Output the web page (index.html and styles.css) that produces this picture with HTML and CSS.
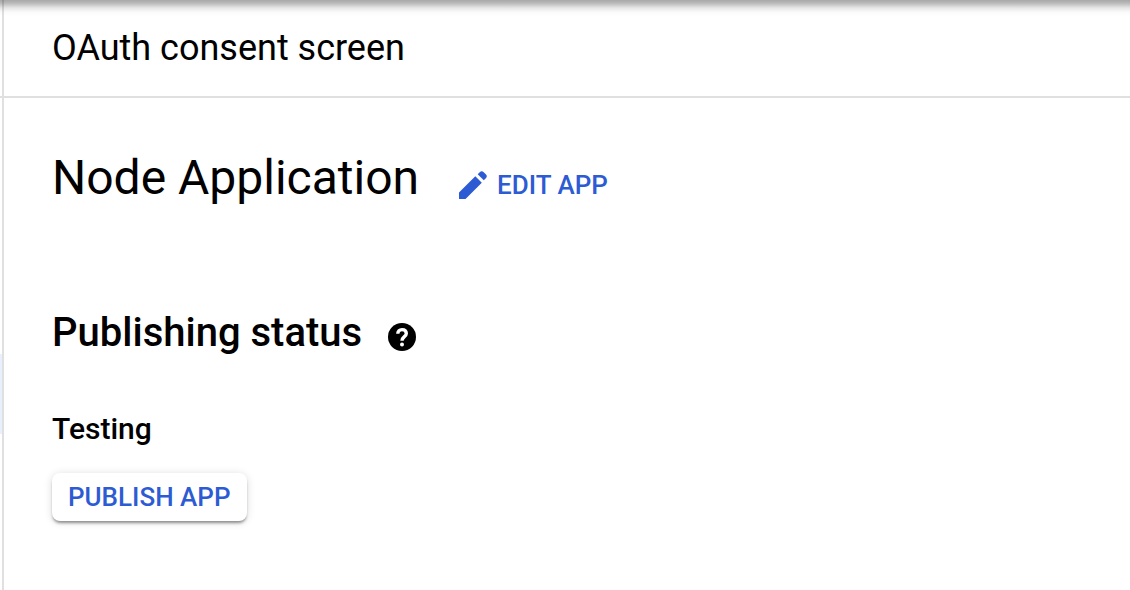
FILE: index.html
```html
<!DOCTYPE html>
<html lang="en">
<head>
<meta charset="utf-8">
<title>OAuth consent screen</title>
<link rel="stylesheet" href="styles.css">
</head>
<body>
<div class="shell">
  <aside class="rail">
    <div class="rail-header"></div>
    <div class="rail-selected"></div>
  </aside>
  <div class="panel">
    <header class="page-header"><h1 class="page-title">OAuth consent screen</h1></header>
    <main class="content">
      <div class="app-row">
        <h2 class="app-name">Node Application</h2>
        <button class="edit-button" type="button">
          <svg class="edit-icon" viewBox="0 0 28 28" aria-hidden="true"><path d="M0 21.500V28h6.500L22.800 11.700l-6.500-6.500zM18.700 3.200L24.800 9.300 26.800 7.300q2-2 0-4L24.700 1.200q-2-2-4 0z"/></svg>
          <span>EDIT APP</span>
        </button>
      </div>
      <div class="status-row">
        <h3 class="status-title">Publishing status</h3>
        <button class="help-button" type="button" aria-label="Help">
          <svg class="help-icon" viewBox="0 0 28 28" aria-hidden="true"><circle cx="14" cy="14" r="14"/><path class="help-mark" d="M9.800 10.800C9.800 8 11.500 6.600 14 6.600s4.300 1.400 4.300 3.900c0 3.200-4.300 3.200-4.300 7.300"/><circle class="help-dot" cx="14" cy="21.500" r="2"/></svg>
        </button>
      </div>
      <h4 class="status-value">Testing</h4>
      <button class="publish-button" type="button">PUBLISH APP</button>
    </main>
  </div>
</div>
</body>
</html>
```
FILE: styles.css
```css
* {
  box-sizing: border-box;
}

body {
  margin: 0;
  background: #fff;
  color: #000;
  font-family: Roboto, sans-serif;
}

h1, h2, h3, h4 {
  margin: 0;
}

button {
  border: 0;
  padding: 0;
  background: none;
  color: #2d5bd3;
  font-family: inherit;
  font-weight: 500;
  cursor: pointer;
}

.shell {
  display: flex;
  min-height: 100vh;
  background: linear-gradient(#a8a8a8, #b8b8b8 3px, #e6e6e6 8px, #fafafa 12px, #fff 16px);
}

.rail {
  width: 4px;
  border-right: 2px solid rgba(0, 0, 0, 0.12);
}

.rail-header {
  height: 98px;
  border-bottom: 2px solid #e0e0e0;
}

.rail-selected {
  height: 80px;
  margin-top: 256px;
  background: #e8f0fe;
}

.panel {
  flex: 1;
}

.page-header {
  padding: 24px 48px;
  border-bottom: 2px solid #e0e0e0;
}

.page-title {
  font-size: 36px;
  font-weight: 400;
  line-height: 48px;
}

.content {
  display: flex;
  flex-direction: column;
  align-items: flex-start;
  padding: 48px;
}

.app-row {
  display: flex;
  align-items: center;
  gap: 40px;
}

.app-name {
  font-size: 48px;
  font-weight: 400;
  line-height: 64px;
}

.edit-button {
  display: flex;
  align-items: center;
  gap: 10px;
  padding-top: 14px;
  font-size: 26px;
  line-height: 32px;
}

.edit-icon {
  width: 28px;
  height: 28px;
  fill: currentColor;
}

.status-row {
  display: flex;
  align-items: center;
  gap: 26px;
  margin-top: 95px;
}

.status-title {
  font-size: 40px;
  font-weight: 500;
  line-height: 56px;
}

.help-button {
  display: flex;
  padding-top: 8px;
  color: #000;
}

.help-icon {
  width: 28px;
  height: 28px;
  fill: currentColor;
}

.help-mark {
  fill: none;
  stroke: #fff;
  stroke-width: 3.4;
}

.help-dot {
  fill: #fff;
}

.status-value {
  margin-top: 48px;
  font-size: 30px;
  font-weight: 500;
  line-height: 40px;
}

.publish-button {
  margin-top: 24px;
  padding: 8px 16px;
  border-radius: 8px;
  background: #fff;
  box-shadow: 0 3px 3px -1px rgba(0, 0, 0, 0.4), 0 1px 8px rgba(0, 0, 0, 0.14);
  font-size: 26px;
  line-height: 32px;
}
```
